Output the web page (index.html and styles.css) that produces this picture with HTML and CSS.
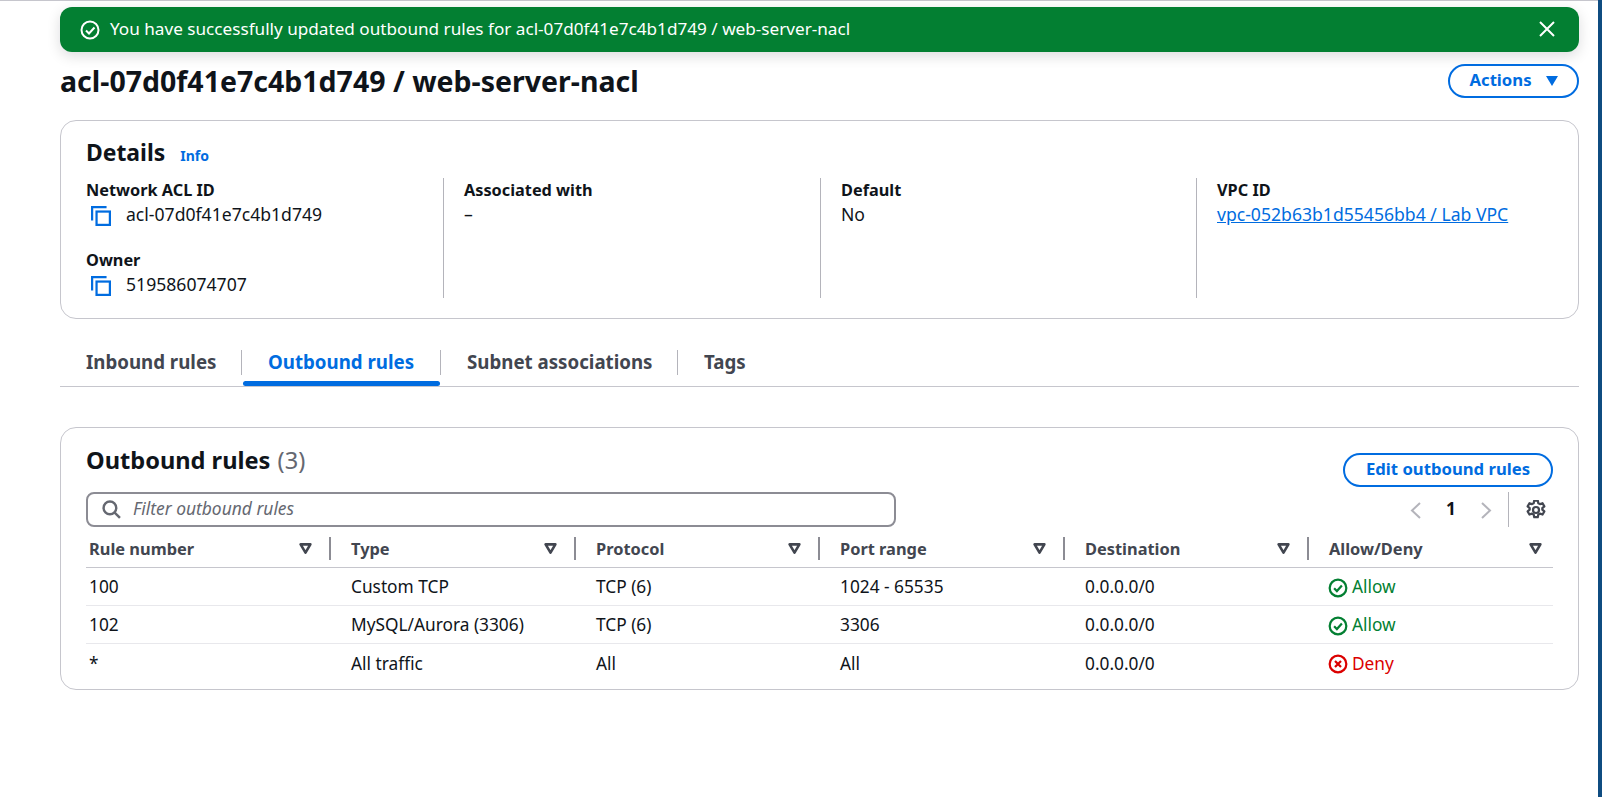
FILE: index.html
```html
<!DOCTYPE html>
<html lang="en">
<head>
<meta charset="utf-8">
<title>acl-07d0f41e7c4b1d749 / web-server-nacl</title>
<link rel="stylesheet" href="styles.css">
</head>
<body>
<div class="app">
  <main class="main">
    <div class="flash">
      <svg class="flash-icon" viewBox="0 0 20 20"><circle cx="10" cy="10" r="8.5"/><path d="M6 10.5l3 3 5.5-6"/></svg>
      <span class="flash-text">You have successfully updated outbound rules for acl-07d0f41e7c4b1d749 / web-server-nacl</span>
      <svg class="flash-close" viewBox="0 0 18 18"><path d="M2 2l14 14M16 2L2 16"/></svg>
    </div>
    <header class="page-head">
      <h1 class="page-title">acl-07d0f41e7c4b1d749 / web-server-nacl</h1>
      <button class="btn btn-actions">Actions<svg class="caret" viewBox="0 0 12 10"><path d="M0 0h12L6 10z"/></svg></button>
    </header>
    <section class="card details">
      <div class="details-head"><h2 class="h2">Details</h2><a class="info">Info</a></div>
      <div class="cols">
        <div class="col col-first">
          <div class="kv">
            <div class="label">Network ACL ID</div>
            <div class="value copy"><svg class="copy-icon" viewBox="1 1 18 18"><path d="M2 14V2h13"/><rect x="6" y="6" width="12" height="12"/></svg>acl-07d0f41e7c4b1d749</div>
          </div>
          <div class="kv">
            <div class="label">Owner</div>
            <div class="value copy"><svg class="copy-icon" viewBox="1 1 18 18"><path d="M2 14V2h13"/><rect x="6" y="6" width="12" height="12"/></svg>519586074707</div>
          </div>
        </div>
        <div class="col">
          <div class="label">Associated with</div>
          <div class="value">–</div>
        </div>
        <div class="col">
          <div class="label">Default</div>
          <div class="value">No</div>
        </div>
        <div class="col">
          <div class="label">VPC ID</div>
          <div class="value"><a class="link">vpc-052b63b1d55456bb4 / Lab VPC</a></div>
        </div>
      </div>
    </section>
    <nav class="tabs">
      <a class="tab tab-1">Inbound rules</a>
      <a class="tab tab-2 active">Outbound rules</a>
      <a class="tab tab-3">Subnet associations</a>
      <a class="tab tab-4">Tags</a>
    </nav>
    <section class="card rules">
      <div class="rules-head">
        <h2 class="h2 rules-title">Outbound rules <span class="count">(3)</span></h2>
        <button class="btn btn-edit">Edit outbound rules</button>
      </div>
      <div class="toolbar">
        <div class="filter">
          <svg class="search-icon" viewBox="0 0 18 18"><circle cx="7.5" cy="7.5" r="6"/><path d="M12 12l5 5"/></svg>
          <span class="placeholder">Filter outbound rules</span>
        </div>
        <div class="pager">
          <svg class="chev" viewBox="0 0 12 18"><path d="M10 2L2 9.500l8 7.500"/></svg>
          <span class="page-num">1</span>
          <svg class="chev" viewBox="0 0 12 18"><path d="M2 2l8 7.500L2 17"/></svg>
          <span class="pager-sep"></span>
          <svg class="gear" viewBox="1 1 18 18"><path d="M8.400 1.500h3.200l.5 2.400 1.500.8 2.300-.8 1.600 2.800-1.800 1.600v1.400l1.800 1.600-1.600 2.800-2.300-.8-1.500.8-.5 2.400H8.400l-.5-2.400-1.500-.8-2.300.8-1.600-2.800 1.800-1.600V8.300L2.500 6.700l1.600-2.800 2.300.8 1.500-.8z"/><circle cx="10" cy="10" r="2.700"/></svg>
        </div>
      </div>
      <table class="table">
        <thead>
          <tr>
            <th class="c1"><div class="th">Rule number<svg class="sort" viewBox="0 0 12 10"><path d="M1.500 1.200h9L6 8.800z"/></svg></div></th>
            <th class="c2"><div class="th">Type<svg class="sort" viewBox="0 0 12 10"><path d="M1.500 1.200h9L6 8.800z"/></svg></div></th>
            <th class="c3"><div class="th">Protocol<svg class="sort" viewBox="0 0 12 10"><path d="M1.500 1.200h9L6 8.800z"/></svg></div></th>
            <th class="c4"><div class="th">Port range<svg class="sort" viewBox="0 0 12 10"><path d="M1.500 1.200h9L6 8.800z"/></svg></div></th>
            <th class="c5"><div class="th">Destination<svg class="sort" viewBox="0 0 12 10"><path d="M1.500 1.200h9L6 8.800z"/></svg></div></th>
            <th class="c6"><div class="th th-last">Allow/Deny<svg class="sort" viewBox="0 0 12 10"><path d="M1.500 1.200h9L6 8.800z"/></svg></div></th>
          </tr>
        </thead>
        <tbody>
          <tr><td>100</td><td>Custom TCP</td><td>TCP (6)</td><td>1024 - 65535</td><td>0.0.0.0/0</td><td><span class="status ok"><svg class="status-icon" viewBox="0 0 18 18"><circle cx="9" cy="9" r="7.500"/><path d="M5.500 9.300l2.500 2.500 4.500-5"/></svg>Allow</span></td></tr>
          <tr><td>102</td><td>MySQL/Aurora (3306)</td><td>TCP (6)</td><td>3306</td><td>0.0.0.0/0</td><td><span class="status ok"><svg class="status-icon" viewBox="0 0 18 18"><circle cx="9" cy="9" r="7.500"/><path d="M5.500 9.300l2.500 2.500 4.500-5"/></svg>Allow</span></td></tr>
          <tr><td>*</td><td>All traffic</td><td>All</td><td>All</td><td>0.0.0.0/0</td><td><span class="status bad"><svg class="status-icon" viewBox="0 0 18 18"><circle cx="9" cy="9" r="7.500"/><path d="M6.300 6.300l5.400 5.400M11.700 6.300l-5.400 5.400"/></svg>Deny</span></td></tr>
        </tbody>
      </table>
    </section>
  </main>
  <div class="edge"></div>
</div>
</body>
</html>
```
FILE: styles.css
```css
* { box-sizing: border-box; }
html, body { margin: 0; padding: 0; height: 100%; overflow: hidden; background: #fff; }
body { font-family: "Noto Sans", "Open Sans", sans-serif; font-size: 17.3px; color: #0f141a; }
.app { display: flex; height: 797px; }
.main { flex: 1; min-width: 0; padding: 7px 19px 0 60px; border-top: 1px solid #c6c6cd; }
.edge { width: 4px; background: #0f4c81; }

.flash { display: flex; align-items: center; height: 45px; margin-top: -1px; padding: 0 23px 0 20px; background: #037f32; border-radius: 12px; color: #fff; box-shadow: 0 4px 14px rgba(0,7,22,.14); }
.flash-icon { width: 20px; height: 20px; fill: none; stroke: #fff; stroke-width: 2; margin-right: 10px; flex: none; }
.flash-text { flex: 1; font-size: 17.15px; line-height: 24px; padding-bottom: 2px; }
.flash-close { width: 18px; height: 18px; fill: none; stroke: #fff; stroke-width: 2; flex: none; margin-bottom: 2px; }

.page-head { display: flex; justify-content: space-between; align-items: center; margin-top: 12px; height: 34px; }
.page-title { margin: 0; font-size: 28.5px; font-weight: 700; line-height: 34px; color: #0f141a; }
.btn { font-family: inherit; font-size: 16.7px; font-weight: 700; color: #006ce0; background: #fff; border: 2px solid #006ce0; border-radius: 20px; padding: 0 0 4px; cursor: pointer; display: inline-flex; align-items: center; justify-content: center; }
.btn-actions { width: 131px; height: 34px; gap: 14px; }
.caret { width: 12px; height: 10px; fill: #006ce0; margin-top: 3px; }

.card { border: 1px solid #c6c6cd; border-radius: 16px; background: #fff; }
.details { height: 199px; margin-top: 22px; padding: 0 25px; }
.details-head { display: flex; align-items: baseline; gap: 15px; margin-top: 16px; height: 31px; }
.h2 { margin: 0; font-size: 22.9px; font-weight: 700; line-height: 32px; }
.info { font-size: 14px; font-weight: 700; color: #006ce0; }
.cols { display: grid; grid-template-columns: 357px 377px 376px 1fr; margin-top: 10px; }
.col { height: 120px; padding-left: 20px; border-left: 1px solid #b4b4bb; }
.col-first { padding-left: 0; border-left: 0; display: flex; flex-direction: column; gap: 20px; }
.label { font-size: 16.3px; font-weight: 700; line-height: 25px; }
.value { font-size: 17.6px; height: 25px; line-height: 23px; }
.copy { display: flex; align-items: flex-start; }
.copy-icon { width: 20px; height: 20px; margin: 3px 15px 0 5px; fill: none; stroke: #006ce0; stroke-width: 2; flex: none; }
.link { color: #006ce0; text-decoration: underline; }

.tabs { display: flex; height: 50px; margin-top: 18px; border-bottom: 1px solid #c6c6cd; }
.tab { font-size: 18.7px; font-weight: 700; color: #424650; line-height: 24px; padding-top: 13px; position: relative; }
.tab-1 { margin-left: 26px; width: 156px; }
.tab-2 { width: 199px; padding-left: 26px; }
.tab-3 { width: 237px; padding-left: 26px; }
.tab-4 { padding-left: 26px; }
.tab-1::after, .tab-2::after, .tab-3::after { content: ""; position: absolute; right: 0; top: 13px; height: 25px; border-right: 1px solid #b4b4bb; }
.tab.active { color: #006ce0; }
.tab.active::before { content: ""; position: absolute; left: 1px; right: 1px; top: 44px; height: 5px; background: #006ce0; border-radius: 3px; }

.rules { margin-top: 40px; height: 263px; padding: 25px 25px 0; }
.rules-head { display: flex; justify-content: space-between; align-items: flex-start; height: 34px; }
.rules-title { font-size: 23.6px; margin-top: -9px; }
.count { font-weight: 400; color: #656871; margin-left: 1px; }
.btn-edit { width: 210px; height: 34px; }
.toolbar { display: flex; justify-content: space-between; align-items: center; margin-top: 5px; height: 35px; }
.filter { width: 810px; height: 35px; border: 2px solid #8c8c94; border-radius: 8px; display: flex; align-items: center; padding-left: 14px; gap: 12px; }
.search-icon { width: 19px; height: 19px; fill: none; stroke: #656871; stroke-width: 2.3; flex: none; }
.placeholder { font-style: italic; color: #656871; font-size: 17.4px; padding-bottom: 3px; }
.pager { display: flex; align-items: center; height: 35px; }
.chev { width: 12px; height: 18px; fill: none; stroke: #b4b4bb; stroke-width: 2; }
.page-num { font-weight: 700; width: 58px; text-align: center; padding-bottom: 2px; }
.pager-sep { height: 35px; border-left: 1px solid #b4b4bb; margin: 0 17px 0 16px; }
.gear { width: 20px; height: 20px; margin-right: 7px; fill: none; stroke: #424650; stroke-width: 2; stroke-linejoin: round; }

.table { width: 100%; border-collapse: separate; border-spacing: 0; table-layout: fixed; }
.table th { padding: 0 0 7px; height: 41px; border-bottom: 1px solid #c6c6cd; text-align: left; vertical-align: bottom; font-weight: 700; color: #424650; font-size: 16.4px; }
.c1 { width: 245px; } .c2 { width: 245px; } .c3 { width: 244px; } .c4 { width: 245px; } .c5 { width: 244px; }
.th { display: flex; align-items: center; justify-content: space-between; height: 23px; padding: 0 17px 0 3px; border-right: 2px solid #8c8c94; }
.c2 .th, .c3 .th, .c4 .th, .c5 .th, .c6 .th { padding-left: 20px; }
.th-last { border-right: 0; padding-right: 11px; }
.sort { width: 13px; height: 11px; fill: none; stroke: #424650; stroke-width: 2.4; stroke-linejoin: round; flex: none; }
.table td { padding: 0 0 0 20px; height: 38px; border-bottom: 1px solid #e8e8ec; font-size: 17.3px; }
.table td:first-child { padding-left: 3px; }
.table tr:last-child td { border-bottom: 0; }
.status { display: inline-flex; align-items: center; gap: 4px; vertical-align: middle; position: relative; left: -1px; margin-top: -2px; }
.status-icon { width: 20px; height: 20px; fill: none; stroke-width: 2; margin-top: 2px; }
.ok { color: #037f32; } .ok .status-icon { stroke: #037f32; }
.bad { color: #db0000; } .bad .status-icon { stroke: #db0000; }
```
